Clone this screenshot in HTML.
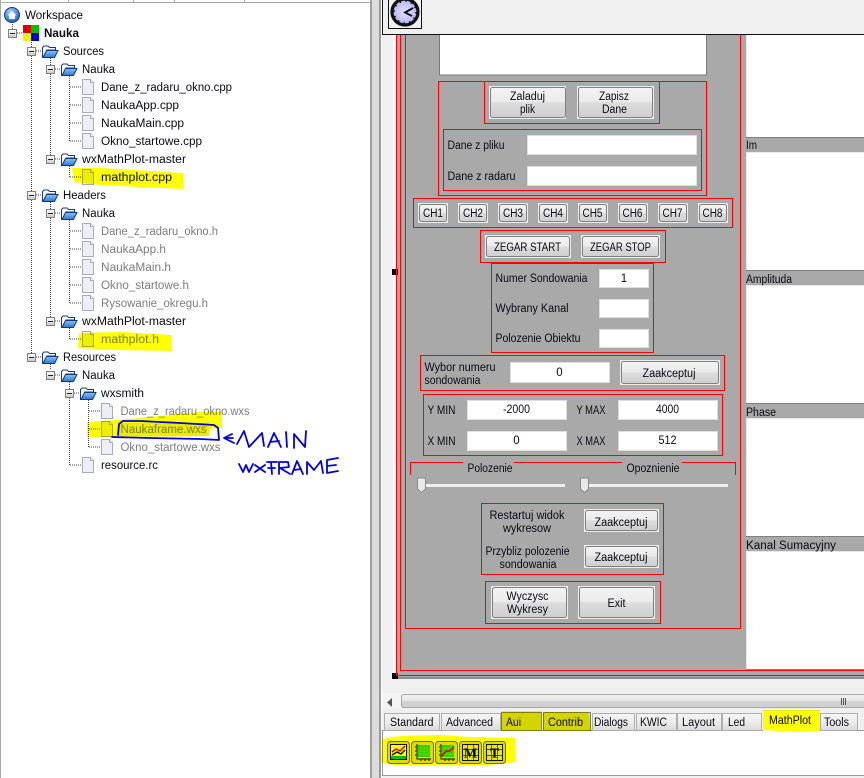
<!DOCTYPE html>
<html><head><meta charset="utf-8"><style>
html,body{margin:0;padding:0;background:#f0f0f0;width:864px;height:778px;overflow:hidden}
svg{display:block;position:absolute;left:0;top:0}
text{font-family:"Liberation Sans",sans-serif;font-size:11.5px;fill:#0a0a14}
.g{fill:#7d7d7d}
.m{text-anchor:middle}
.r{fill:none;stroke:#f00;stroke-width:1;shape-rendering:crispEdges}
.i{fill:#fff;stroke:#dedede;shape-rendering:crispEdges}
.o{fill:#ececec}
.b{fill:url(#bt);stroke:#808080}
.d{fill:none;stroke:#444;stroke-width:1;stroke-dasharray:1 1;shape-rendering:crispEdges}
.y{mix-blend-mode:multiply;fill:#ffff00}
.s{fill:none;stroke:#0000e0;stroke-width:1.8;stroke-linejoin:round;stroke-linecap:round}
.t{fill:url(#tb);stroke:#aeaeae;shape-rendering:crispEdges}
.td{fill:#d4d4d4;stroke:#808080;shape-rendering:crispEdges}
</style></head><body>
<svg width="864" height="778" viewBox="0 0 864 778" xmlns="http://www.w3.org/2000/svg">
<defs>
<linearGradient id="bt" x1="0" y1="0" x2="0" y2="1"><stop offset="0" stop-color="#f3f3f3"/><stop offset=".48" stop-color="#ebebeb"/><stop offset=".5" stop-color="#dddddd"/><stop offset="1" stop-color="#cfcfcf"/></linearGradient>
<linearGradient id="tb" x1="0" y1="0" x2="0" y2="1"><stop offset="0" stop-color="#f6f6f6"/><stop offset=".5" stop-color="#ececec"/><stop offset="1" stop-color="#d9d9d9"/></linearGradient>
<linearGradient id="sb" x1="0" y1="0" x2="0" y2="1"><stop offset="0" stop-color="#f2f2f2"/><stop offset=".5" stop-color="#e6e6e6"/><stop offset=".52" stop-color="#d2d2d2"/><stop offset="1" stop-color="#cfcfcf"/></linearGradient>
<linearGradient id="ex" x1="0" y1="0" x2="0" y2="1"><stop offset="0" stop-color="#ffffff"/><stop offset="1" stop-color="#c8c8c8"/></linearGradient>
<radialGradient id="gl" cx=".4" cy=".3" r=".8"><stop offset="0" stop-color="#a8d4ff"/><stop offset="1" stop-color="#0a52b8"/></radialGradient>
<radialGradient id="ck" cx=".5" cy=".5" r=".6"><stop offset="0" stop-color="#e4e4ff"/><stop offset="1" stop-color="#a8a8f4"/></radialGradient>
<linearGradient id="fo" x1="0" y1="0" x2="0" y2="1"><stop offset="0" stop-color="#8cc4f4"/><stop offset="1" stop-color="#2a78d0"/></linearGradient>
<g id="file"><path d="M.5.5H8.5L11.5 3.5V15.5H.5Z" fill="#eeeef7" stroke="#a8a8c0"/><path d="M8.5.5V3.5H11.5" fill="#fff" stroke="#a8a8c0"/></g>
<g id="fold"><path d="M.5 12.5V2.5L2 1H6L7.5 2.5H13.5V5H5L1 12.5Z" fill="#fff" stroke="#123a80"/><path d="M1 12.5L4.5 5.5H16L12.5 12.5Z" fill="url(#fo)" stroke="#123a80"/></g>
<g id="ex1"><rect x=".5" y=".5" width="8" height="8" fill="url(#ex)" stroke="#808080"/><path d="M2 4.5H7" stroke="#222" stroke-width="1"/></g>
<g id="tool"><rect x=".5" y=".5" width="22" height="22" rx="3" fill="#dcdc00" stroke="#6a6a00"/></g>
</defs>

<!-- left tree panel -->
<rect x="0" y="0" width="370" height="778" fill="#fff"/>
<rect x="0" y="0" width="1" height="778" fill="#a8a8a8"/>
<path d="M0 2.5H370M68.5 0V2M133.5 0V2M174.5 0V2M244.5 0V2" stroke="#a8a8a8" fill="none" shape-rendering="crispEdges"/>
<rect x="370" y="0" width="2" height="778" fill="#a0a0a0"/>
<rect x="372" y="0" width="7" height="778" fill="#dcdcdc"/>
<rect x="379" y="0" width="2" height="778" fill="#9a9a9a"/>
<rect x="381" y="0" width="1" height="778" fill="#fff"/>

<!-- tree lines -->
<path class="d" d="M12.5 20V29M31.5 38V353M50.5 56V155M50.5 200V317M50.5 362V370M69.5 74V141M69.5 164V177M69.5 218V303M69.5 326V339M69.5 380V465M88.5 398V447
M17 33H23M36 51H42M55 69H61M55 159H61M36 195H42M55 213H61M55 321H61M36 357H42M55 375H61M74 393H80
M70 87H81M70 105H81M70 123H81M70 141H81M70 177H81M70 231H81M70 249H81M70 267H81M70 285H81M70 303H81M70 339H81M89 411H100M89 429H100M89 447H100M70 465H81"/>

<!-- expanders -->
<use href="#ex1" x="8" y="29"/><use href="#ex1" x="27" y="47"/><use href="#ex1" x="46" y="65"/><use href="#ex1" x="46" y="155"/><use href="#ex1" x="27" y="191"/><use href="#ex1" x="46" y="209"/><use href="#ex1" x="46" y="317"/><use href="#ex1" x="27" y="353"/><use href="#ex1" x="46" y="371"/><use href="#ex1" x="65" y="389"/>

<!-- tree icons -->
<circle cx="12" cy="15" r="7.5" fill="url(#gl)" stroke="#0a3c90"/>
<path d="M7.5 15.5L12 11L16.5 15.5H15V19H9V15.5Z" fill="#fff"/>
<rect x="23" y="25" width="8" height="8" fill="#e00000"/><rect x="31" y="25" width="8" height="8" fill="#00c000"/><rect x="23" y="33" width="8" height="8" fill="#f0f000"/><rect x="31" y="33" width="8" height="8" fill="#0000e0"/>
<use href="#fold" x="42" y="45"/><use href="#fold" x="61" y="63"/><use href="#fold" x="61" y="153"/><use href="#fold" x="42" y="189"/><use href="#fold" x="61" y="207"/><use href="#fold" x="61" y="315"/><use href="#fold" x="42" y="351"/><use href="#fold" x="61" y="369"/><use href="#fold" x="80" y="387"/>
<use href="#file" x="82" y="79"/><use href="#file" x="82" y="97"/><use href="#file" x="82" y="115"/><use href="#file" x="82" y="133"/><use href="#file" x="82" y="169"/><use href="#file" x="82" y="223"/><use href="#file" x="82" y="241"/><use href="#file" x="82" y="259"/><use href="#file" x="82" y="277"/><use href="#file" x="82" y="295"/><use href="#file" x="82" y="331"/><use href="#file" x="101" y="403"/><use href="#file" x="101" y="421"/><use href="#file" x="101" y="439"/><use href="#file" x="82" y="457"/>

<rect x="118" y="423" width="91" height="13" fill="#ececec"/>
<!-- tree text -->
<text x="25" y="19" textLength="58" lengthAdjust="spacingAndGlyphs">Workspace</text>
<text x="44" y="37" style="font-weight:bold" textLength="35" lengthAdjust="spacingAndGlyphs">Nauka</text>
<text x="63" y="55" textLength="41" lengthAdjust="spacingAndGlyphs">Sources</text><text x="82" y="73" textLength="33" lengthAdjust="spacingAndGlyphs">Nauka</text>
<text x="101" y="91" textLength="131" lengthAdjust="spacingAndGlyphs">Dane_z_radaru_okno.cpp</text><text x="101" y="109" textLength="78" lengthAdjust="spacingAndGlyphs">NaukaApp.cpp</text><text x="101" y="127" textLength="83" lengthAdjust="spacingAndGlyphs">NaukaMain.cpp</text><text x="101" y="145" textLength="101" lengthAdjust="spacingAndGlyphs">Okno_startowe.cpp</text>
<text x="82" y="163" textLength="104" lengthAdjust="spacingAndGlyphs">wxMathPlot-master</text><text x="101" y="181" textLength="71" lengthAdjust="spacingAndGlyphs">mathplot.cpp</text>
<text x="63" y="199" textLength="43" lengthAdjust="spacingAndGlyphs">Headers</text><text x="82" y="217" textLength="33" lengthAdjust="spacingAndGlyphs">Nauka</text>
<text x="101" y="235" class="g" textLength="117" lengthAdjust="spacingAndGlyphs">Dane_z_radaru_okno.h</text><text x="101" y="253" class="g" textLength="65" lengthAdjust="spacingAndGlyphs">NaukaApp.h</text><text x="101" y="271" class="g" textLength="70" lengthAdjust="spacingAndGlyphs">NaukaMain.h</text><text x="101" y="289" class="g" textLength="88" lengthAdjust="spacingAndGlyphs">Okno_startowe.h</text><text x="101" y="307" class="g" textLength="107" lengthAdjust="spacingAndGlyphs">Rysowanie_okregu.h</text>
<text x="82" y="325" textLength="104" lengthAdjust="spacingAndGlyphs">wxMathPlot-master</text><text x="101" y="343" class="g" textLength="58" lengthAdjust="spacingAndGlyphs">mathplot.h</text>
<text x="63" y="361" textLength="53" lengthAdjust="spacingAndGlyphs">Resources</text><text x="82" y="379" textLength="33" lengthAdjust="spacingAndGlyphs">Nauka</text><text x="101" y="397" textLength="43" lengthAdjust="spacingAndGlyphs">wxsmith</text>
<text x="120.5" y="415" class="g" textLength="129" lengthAdjust="spacingAndGlyphs">Dane_z_radaru_okno.wxs</text><text x="120.5" y="433" class="g" textLength="86" lengthAdjust="spacingAndGlyphs">Naukaframe.wxs</text><text x="120.5" y="451" class="g" textLength="100" lengthAdjust="spacingAndGlyphs">Okno_startowe.wxs</text>
<text x="101" y="469" textLength="57" lengthAdjust="spacingAndGlyphs">resource.rc</text>

<!-- tree highlights -->
<path class="y" d="M72 168L100 168L150 171L183 173L184 189L140 187L100 185L74 182Z"/>
<path class="y" d="M79 333L120 332L171 335L172 351L120 350L78 348Z"/>
<path class="y" d="M87 422L116 420L160 416L200 412L222 412L222 428L209 429V436L118 437H87Z"/>
<!-- scribbles -->
<path class="s" d="M112 437L150 438L200 439L219 440L218 428L214 425L180 423L140 421L123 421L119 424L118 435"/>
<path class="s" d="M233 438L224 438M232 434L224 438L234 443"/>
<path class="s" d="M237 444L244 431L249 447L262 433L264 446M268 447L274 433L281 447M270 442L279 441M286 432L287 447M294 448L294 434L305 447L306 431"/>
<path class="s" d="M239 464L243 472L246 465L249 472L253 464M255 465L265 472M265 465L255 472M267 462H277M271 462L272 474M268 468H275M279 474V462L288 462L289 467L280 468L290 474M292 474L297 461L303 474M294 470L301 469M307 474V462L314 470L321 461L323 473M327 473V460L338 458M327 466L336 465M327 473L338 471"/>

<!-- designer area -->
<rect x="382" y="34" width="482" height="644" fill="#f0f0f0"/>
<rect x="393" y="34" width="3" height="644" fill="#fff"/>
<rect x="396" y="34" width="468" height="643" fill="#a9a9a9"/>
<rect x="394" y="677" width="470" height="2" fill="#8c8c8c"/>
<rect x="392" y="673" width="6" height="6" fill="#000"/>
<rect x="392" y="269" width="6" height="6" fill="#000"/>

<!-- right panels -->
<rect x="746" y="34" width="118" height="103" fill="#fff"/><rect x="746" y="152" width="118" height="118" fill="#fff"/><rect x="746" y="285" width="118" height="118" fill="#fff"/><rect x="746" y="418" width="118" height="118" fill="#fff"/><rect x="746" y="551" width="118" height="118" fill="#fff"/>
<path d="M746.5 34V137M746.5 152V270M746.5 285V403M746.5 418V536M746.5 551V669M746 152.5H864M746 285.5H864M746 418.5H864M746 551.5H864" stroke="#e8e8e8" fill="none" shape-rendering="crispEdges"/>
<path d="M746 137.5H864M746 270.5H864M746 403.5H864M746 536.5H864M746 669.5H864" stroke="#808080" fill="none" shape-rendering="crispEdges"/>
<text x="746" y="149" textLength="11" lengthAdjust="spacingAndGlyphs">Im</text><text x="746" y="283" textLength="46" lengthAdjust="spacingAndGlyphs">Amplituda</text><text x="746" y="416" textLength="30" lengthAdjust="spacingAndGlyphs">Phase</text><text x="746" y="549" textLength="90" lengthAdjust="spacingAndGlyphs">Kanal Sumacyjny</text>

<!-- outer red frames -->
<path class="r" d="M396.5 34V675.5H864M400.5 34V670.5H864M405.5 34V628.5H740.5V34"/>

<!-- toolbar -->
<rect x="382" y="0" width="482" height="34" fill="#f0f0f0"/>
<rect x="388.5" y="-1" width="33" height="29.5" fill="#f0f0f0" stroke="#111" shape-rendering="crispEdges"/>
<circle cx="405" cy="12" r="13" fill="url(#ck)" stroke="#111" stroke-width="3.2"/>
<circle cx="405" cy="12" r="11" fill="none" stroke="#111" stroke-width="1.6" stroke-dasharray="1.5 4.25"/>
<path d="M413 8L405 12.5L412 16" fill="none" stroke="#111" stroke-width="1.9"/>

<!-- white box -->
<rect x="439.5" y="30" width="267" height="45" fill="#fff" stroke="#7a7a7a" shape-rendering="crispEdges"/>
<rect x="439" y="0" width="268" height="34" fill="#f0f0f0"/>
<path d="M382.5 0V34.5H864" fill="none" stroke="#111" shape-rendering="crispEdges"/>

<!-- group 1 -->
<rect class="r" x="438.5" y="81.5" width="268" height="114"/>
<rect class="r" x="484.5" y="81.5" width="175" height="42"/>
<rect class="o" x="489" y="86" width="77" height="33"/><rect class="b" x="490.5" y="87.5" width="75" height="30" rx="2"/>
<rect class="o" x="577" y="86" width="77" height="33"/><rect class="b" x="578.5" y="87.5" width="74" height="30" rx="2"/>
<text class="m" x="527.5" y="100" textLength="35" lengthAdjust="spacingAndGlyphs">Zaladuj</text><text class="m" x="527.5" y="113" textLength="15" lengthAdjust="spacingAndGlyphs">plik</text>
<text class="m" x="614" y="100" textLength="30" lengthAdjust="spacingAndGlyphs">Zapisz</text><text class="m" x="614.5" y="113" textLength="25" lengthAdjust="spacingAndGlyphs">Dane</text>
<rect class="r" x="443.5" y="129.5" width="258" height="61"/>
<text x="447.5" y="149" textLength="57" lengthAdjust="spacingAndGlyphs">Dane z pliku</text><text x="447.5" y="180" textLength="68" lengthAdjust="spacingAndGlyphs">Dane z radaru</text>
<rect class="i" x="527.5" y="135.5" width="169" height="19"/><rect class="i" x="527.5" y="166.5" width="169" height="19"/>

<!-- CH -->
<rect class="r" x="413.5" y="198.5" width="319" height="29"/>
<rect class="o" x="418" y="203" width="30" height="20"/><rect class="b" x="419.5" y="204.5" width="27" height="17" rx="2"/><text class="m" x="433" y="217" textLength="20" lengthAdjust="spacingAndGlyphs">CH1</text>
<rect class="o" x="458" y="203" width="30" height="20"/><rect class="b" x="459.5" y="204.5" width="27" height="17" rx="2"/><text class="m" x="473" y="217" textLength="20" lengthAdjust="spacingAndGlyphs">CH2</text>
<rect class="o" x="498" y="203" width="30" height="20"/><rect class="b" x="499.5" y="204.5" width="27" height="17" rx="2"/><text class="m" x="513" y="217" textLength="20" lengthAdjust="spacingAndGlyphs">CH3</text>
<rect class="o" x="538" y="203" width="30" height="20"/><rect class="b" x="539.5" y="204.5" width="27" height="17" rx="2"/><text class="m" x="553" y="217" textLength="20" lengthAdjust="spacingAndGlyphs">CH4</text>
<rect class="o" x="578" y="203" width="30" height="20"/><rect class="b" x="579.5" y="204.5" width="27" height="17" rx="2"/><text class="m" x="592.5" y="217" textLength="20" lengthAdjust="spacingAndGlyphs">CH5</text>
<rect class="o" x="618" y="203" width="30" height="20"/><rect class="b" x="619.5" y="204.5" width="27" height="17" rx="2"/><text class="m" x="632.5" y="217" textLength="20" lengthAdjust="spacingAndGlyphs">CH6</text>
<rect class="o" x="658" y="203" width="30" height="20"/><rect class="b" x="659.5" y="204.5" width="27" height="17" rx="2"/><text class="m" x="672.5" y="217" textLength="20" lengthAdjust="spacingAndGlyphs">CH7</text>
<rect class="o" x="698" y="203" width="30" height="20"/><rect class="b" x="699.5" y="204.5" width="27" height="17" rx="2"/><text class="m" x="712.5" y="217" textLength="20" lengthAdjust="spacingAndGlyphs">CH8</text>

<!-- zegar -->
<rect class="r" x="480.5" y="230.5" width="185" height="32"/>
<rect class="o" x="485" y="235" width="86" height="23"/><rect class="b" x="486.5" y="236.5" width="83" height="20" rx="2"/><text class="m" x="527.5" y="251" textLength="67" lengthAdjust="spacingAndGlyphs">ZEGAR START</text>
<rect class="o" x="581" y="235" width="79" height="23"/><rect class="b" x="582.5" y="236.5" width="76" height="20" rx="2"/><text class="m" x="620.5" y="251" textLength="61" lengthAdjust="spacingAndGlyphs">ZEGAR STOP</text>

<!-- numer -->
<rect class="r" x="491.5" y="263.5" width="162" height="89"/>
<text x="495.5" y="282" textLength="92" lengthAdjust="spacingAndGlyphs">Numer Sondowania</text><text x="495.5" y="312" textLength="73" lengthAdjust="spacingAndGlyphs">Wybrany Kanal</text><text x="495.5" y="342" textLength="85" lengthAdjust="spacingAndGlyphs">Polozenie Obiektu</text>
<rect class="i" x="599.5" y="269.5" width="49" height="18"/><rect class="i" x="599.5" y="299.5" width="49" height="18"/><rect class="i" x="599.5" y="329.5" width="49" height="18"/>
<text class="m" x="624" y="282">1</text>

<!-- wybor -->
<rect class="r" x="420.5" y="355.5" width="304" height="35"/>
<text x="424.5" y="371" textLength="71" lengthAdjust="spacingAndGlyphs">Wybor numeru</text><text x="424.5" y="384" textLength="56" lengthAdjust="spacingAndGlyphs">sondowania</text>
<rect class="i" x="510.5" y="362.5" width="99" height="20"/><text class="m" x="559.5" y="376">0</text>
<rect class="o" x="620" y="360" width="100" height="25"/><rect class="b" x="621.5" y="361.5" width="97" height="22" rx="2"/><text class="m" x="669" y="377" textLength="53" lengthAdjust="spacingAndGlyphs">Zaakceptuj</text>

<!-- y/x -->
<rect class="r" x="423.5" y="394.5" width="299" height="61"/>
<text x="427.5" y="414" textLength="28" lengthAdjust="spacingAndGlyphs">Y MIN</text><text x="427.5" y="445" textLength="28" lengthAdjust="spacingAndGlyphs">X MIN</text><text x="576.5" y="414" textLength="29" lengthAdjust="spacingAndGlyphs">Y MAX</text><text x="576.5" y="445" textLength="29" lengthAdjust="spacingAndGlyphs">X MAX</text>
<rect class="i" x="467.5" y="400.5" width="99" height="19"/><rect class="i" x="467.5" y="431.5" width="99" height="19"/><rect class="i" x="618.5" y="400.5" width="99" height="19"/><rect class="i" x="618.5" y="431.5" width="99" height="19"/>
<text class="m" x="516.5" y="413" textLength="27" lengthAdjust="spacingAndGlyphs">-2000</text><text class="m" x="516.5" y="444">0</text><text class="m" x="667.5" y="413" textLength="23" lengthAdjust="spacingAndGlyphs">4000</text><text class="m" x="667.5" y="444" textLength="18" lengthAdjust="spacingAndGlyphs">512</text>

<!-- sliders -->
<path class="r" d="M410.5 475V462.5H463M514 462.5H622M682 462.5H735.5V475"/>
<text x="467.5" y="472" textLength="45" lengthAdjust="spacingAndGlyphs">Polozenie</text><text x="626.5" y="472" textLength="53" lengthAdjust="spacingAndGlyphs">Opoznienie</text>
<rect x="421" y="484" width="144" height="3" fill="#efefef"/><rect x="584" y="484" width="144" height="3" fill="#efefef"/>
<path d="M417.5 478H425.5V489L421.5 492.5L417.5 489Z" fill="#e8e8e8" stroke="#8a8a8a"/>
<path d="M580.5 478H588.5V489L584.5 492.5L580.5 489Z" fill="#e8e8e8" stroke="#8a8a8a"/>

<!-- restart -->
<rect class="r" x="481.5" y="503.5" width="182" height="71"/>
<text class="m" x="527" y="519" textLength="75" lengthAdjust="spacingAndGlyphs">Restartuj widok</text><text class="m" x="527" y="532" textLength="48" lengthAdjust="spacingAndGlyphs">wykresow</text>
<text class="m" x="527.5" y="555" textLength="84" lengthAdjust="spacingAndGlyphs">Przybliz polozenie</text><text class="m" x="528" y="568" textLength="57" lengthAdjust="spacingAndGlyphs">sondowania</text>
<rect class="o" x="584" y="509" width="75" height="23"/><rect class="b" x="585.5" y="510.5" width="72" height="20" rx="2"/><text class="m" x="621" y="526" textLength="53" lengthAdjust="spacingAndGlyphs">Zaakceptuj</text>
<rect class="o" x="584" y="545" width="75" height="23"/><rect class="b" x="585.5" y="546.5" width="72" height="20" rx="2"/><text class="m" x="621" y="561" textLength="53" lengthAdjust="spacingAndGlyphs">Zaakceptuj</text>

<!-- exit -->
<rect class="r" x="485.5" y="581.5" width="175" height="42"/>
<rect class="o" x="491" y="586" width="77" height="33"/><rect class="b" x="492.5" y="587.5" width="74" height="30" rx="2"/>
<rect class="o" x="578" y="586" width="77" height="33"/><rect class="b" x="579.5" y="587.5" width="74" height="30" rx="2"/>
<text class="m" x="527.5" y="600" textLength="42" lengthAdjust="spacingAndGlyphs">Wyczysc</text><text class="m" x="527.5" y="613" textLength="41" lengthAdjust="spacingAndGlyphs">Wykresy</text><text class="m" x="616.5" y="607" textLength="18" lengthAdjust="spacingAndGlyphs">Exit</text>

<!-- scrollbar -->
<rect x="382" y="693" width="482" height="15" fill="#f4f4f4"/>
<path d="M392 698V707L387 702.5Z" fill="#555"/>
<rect x="401.5" y="694.5" width="470" height="13" rx="2" fill="url(#sb)" stroke="#a8a8a8"/>
<path d="M841.5 698V705M843.5 698V705M845.5 698V705" stroke="#555" shape-rendering="crispEdges"/>

<!-- tab panel -->
<rect x="382" y="730" width="482" height="45" fill="#fff"/>
<path d="M382 730.5H864M382.5 730V775.5H864" fill="none" stroke="#9a9a9a" shape-rendering="crispEdges"/>
<rect class="t" x="384.5" y="713.5" width="55" height="17"/><rect class="t" x="441.5" y="713.5" width="59" height="17"/><rect class="td" x="501.5" y="712.5" width="40" height="18"/><rect class="td" x="543.5" y="712.5" width="47" height="18"/><rect class="t" x="592.5" y="713.5" width="42" height="17"/><rect class="t" x="636.5" y="713.5" width="40" height="17"/><rect class="t" x="677.5" y="713.5" width="44" height="17"/><rect class="t" x="722.5" y="713.5" width="39" height="17"/><rect class="t" x="820.5" y="713.5" width="37" height="17"/>
<rect x="763" y="711" width="57" height="21" fill="#fff"/>
<text x="390" y="726" textLength="43.5" lengthAdjust="spacingAndGlyphs">Standard</text><text x="446" y="726" textLength="47" lengthAdjust="spacingAndGlyphs">Advanced</text><text x="506" y="726" textLength="15" lengthAdjust="spacingAndGlyphs">Aui</text><text x="548" y="726" textLength="35" lengthAdjust="spacingAndGlyphs">Contrib</text><text x="594" y="726" textLength="34" lengthAdjust="spacingAndGlyphs">Dialogs</text><text x="640" y="726" textLength="27" lengthAdjust="spacingAndGlyphs">KWIC</text><text x="682" y="726" textLength="33" lengthAdjust="spacingAndGlyphs">Layout</text><text x="728" y="726" textLength="17" lengthAdjust="spacingAndGlyphs">Led</text><text x="769" y="724" textLength="42" lengthAdjust="spacingAndGlyphs">MathPlot</text><text x="824" y="726" textLength="25" lengthAdjust="spacingAndGlyphs">Tools</text>

<!-- toolbar icons -->
<g transform="translate(387,741)"><use href="#tool"/><rect x="3.5" y="3.5" width="16" height="15" fill="#fff" stroke="#111"/><path d="M4 16.5H19" stroke="#00c000" stroke-width="3"/><path d="M5 11L9 8L13 10L18 5" stroke="#d00000" fill="none" stroke-width="1.5"/><path d="M5 14L10 11L14 13L18 9" stroke="#111" fill="none" stroke-width="1.5"/></g>
<g transform="translate(411,741)"><use href="#tool"/><rect x="7" y="4" width="12" height="12" fill="#00e000"/><path d="M10 4V16M13 4V16M16 4V16M7 7H19M7 10H19M7 13H19" stroke="#a0c000" stroke-width=".8"/><path d="M6 3V18H20M4 6H6M4 10H6M4 14H6M10 18V20M14 18V20M18 18V20" stroke="#111" fill="none"/></g>
<g transform="translate(435,741)"><use href="#tool"/><rect x="7" y="4" width="12" height="12" fill="#00e000"/><path d="M10 4V16M13 4V16M16 4V16M7 7H19M7 10H19M7 13H19" stroke="#a0c000" stroke-width=".8"/><path d="M7 15L11 10L15 10L19 6" stroke="#e00000" fill="none" stroke-width="1.6"/><path d="M6 3V18H20M4 6H6M4 10H6M4 14H6M10 18V20M14 18V20M18 18V20" stroke="#111" fill="none"/></g>
<g transform="translate(459,741)"><use href="#tool"/><rect x="3.5" y="3.5" width="16" height="16" fill="#e8e800" stroke="#111"/><path d="M8.5 4V19M14.5 4V19M4 8.5H19M4 14.5H19" stroke="#333" stroke-width=".8"/><text x="11.5" y="16.5" text-anchor="middle" style="font-family:'Liberation Serif',serif;font-weight:bold;font-size:14px;fill:#000">M</text></g>
<g transform="translate(483,741)"><use href="#tool"/><rect x="3.5" y="3.5" width="16" height="16" fill="#e8e800" stroke="#111"/><path d="M8.5 4V19M14.5 4V19M4 8.5H19M4 14.5H19" stroke="#333" stroke-width=".8"/><text x="11.5" y="16.5" text-anchor="middle" style="font-family:'Liberation Serif',serif;font-weight:bold;font-size:14px;fill:#000">T</text></g>

<!-- tab + toolbar highlights -->
<path class="y" d="M501 711H541V731H501Z"/>
<path class="y" d="M543 712L588 712L592 731H543Z"/>
<path class="y" d="M763 710H820V731L795 732L763 730Z"/>
<path class="y" d="M382 739L400 736L440 735L470 737L515 738L516 762L490 765L440 765L395 765L381 763Z"/>
</svg>
</body></html>
